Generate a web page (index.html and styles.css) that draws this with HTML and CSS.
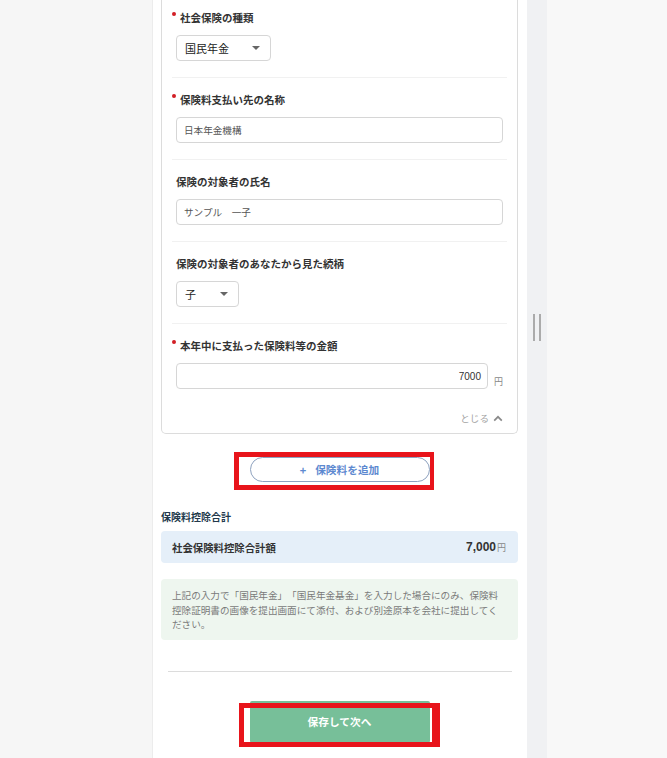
FILE: index.html
```html
<!DOCTYPE html>
<html lang="ja">
<head>
<meta charset="utf-8">
<title>保険料控除</title>
<link rel="stylesheet" href="styles.css">
</head>
<body>
<div class="layout">
  <div class="side-left"></div>
  <main class="panel">
    <section class="card">
      <div class="field first">
        <div class="label"><span class="req"></span>社会保険の種類</div>
        <div class="select select-wide"><span>国民年金</span><i class="caret"></i></div>
      </div>
      <div class="field">
        <div class="label"><span class="req"></span>保険料支払い先の名称</div>
        <div class="input">日本年金機構</div>
      </div>
      <div class="field">
        <div class="label">保険の対象者の氏名</div>
        <div class="input">サンプル　一子</div>
      </div>
      <div class="field">
        <div class="label">保険の対象者のあなたから見た続柄</div>
        <div class="select select-narrow"><span>子</span><i class="caret"></i></div>
      </div>
      <div class="field last">
        <div class="label"><span class="req"></span>本年中に支払った保険料等の金額</div>
        <div class="amount-row">
          <div class="input input-number">7000</div>
          <span class="unit">円</span>
        </div>
      </div>
      <div class="card-foot">
        <span class="close">とじる<svg class="chev" width="10" height="7" viewBox="0 0 10 7"><polyline points="1.2,5.6 5,1.8 8.8,5.6" fill="none" stroke="#8a8a8a" stroke-width="1.7"/></svg></span>
      </div>
    </section>

    <div class="add-row">
      <button class="add-btn"><span class="plus">+</span>保険料を追加</button>
      <span class="annot annot-add"></span>
    </div>

    <h3 class="sum-title">保険料控除合計</h3>
    <div class="sum-box">
      <span class="sum-label">社会保険料控除合計額</span>
      <span class="sum-amount"><b>7,000</b><small>円</small></span>
    </div>

    <p class="note">上記の入力で「国民年金」「国民年金基金」を入力した場合にのみ、保険料控除証明書の画像を提出画面にて添付、および別途原本を会社に提出してください。</p>

    <hr class="divider">

    <div class="save-row">
      <button class="save-btn">保存して次へ</button>
      <span class="annot annot-save"></span>
    </div>
  </main>
  <div class="splitter"><span class="grip"></span></div>
  <div class="side-right"></div>
</div>
</body>
</html>
```

FILE: styles.css
```css
* { box-sizing: border-box; }
html, body { margin: 0; padding: 0; }
body {
  font-family: "Noto Sans CJK JP", "Noto Sans", sans-serif;
  color: #333;
  background: #f7f7f7;
  overflow: hidden;
  text-spacing-trim: space-all;
}
.layout { display: flex; height: 758px; }
.side-left { width: 152px; flex: none; background: #f6f6f6; }
.side-right { flex: 1; background: #f8f8f8; }
.splitter {
  width: 20px; flex: none; background: #f0f1f3;
  display: flex; flex-direction: column; padding-top: 314px; padding-left: 6px;
}
.grip {
  display: block; width: 8px; height: 27px;
  border-left: 2px solid #ababab; border-right: 2px solid #ababab;
}
.panel {
  width: 375px; flex: none; background: #fff;
  border-left: 1px solid #ececec;
  padding: 0 9px 0 8px;
}

/* card */
.card {
  border: 1px solid #dcdcdc; border-top: none;
  border-radius: 0 0 5px 5px;
  height: 434px;
}
.field {
  margin: 0 10px;
  padding: 15px 4px 16px;
  border-bottom: 1px solid #f1f1f1;
}
.field.first { padding-top: 11px; }
.field.last { border-bottom: none; padding-bottom: 0; }
.label {
  font-size: 10.5px; line-height: 14px; height: 14px;
  font-weight: bold; color: #333; white-space: nowrap;
}
.req {
  display: inline-block; width: 3.8px; height: 3.8px; border-radius: 50%;
  background: #d21f26; margin-left: -4px; margin-right: 4.2px;
  vertical-align: top; margin-top: 1px;
}
.input, .select {
  margin-top: 10px; height: 26px;
  border: 1px solid #d6d6d6; border-radius: 4px;
  display: flex; align-items: center;
  background: #fff;
}
.input { padding: 0 7px; font-size: 9.6px; color: #555; }
.select { padding: 0 10px 0 8px; font-size: 11px; color: #222; justify-content: space-between; }
.select-wide { width: 95px; }
.select-narrow { width: 63px; }
.caret {
  width: 0; height: 0;
  border-left: 4px solid transparent; border-right: 4px solid transparent;
  border-top: 4.5px solid #666;
}
.amount-row { display: flex; align-items: flex-end; }
.amount-row .input { flex: 1; margin-right: 6px; }
.input-number {
  justify-content: flex-end; padding-right: 6px;
  font-family: "Liberation Sans", Arial, sans-serif; font-size: 10px; color: #333;
}
.unit { font-size: 9px; line-height: 12px; color: #888; margin-bottom: 1px; width: 9px; }
.card-foot {
  margin: 0 14px; padding-top: 21px;
  display: flex; justify-content: flex-end;
}
.close {
  display: flex; align-items: center; gap: 4px;
  font-size: 9.6px; line-height: 16px; color: #a3a3a3;
}
.chev { display: block; }

/* add button */
.add-row { position: relative; margin-top: 23px; display: flex; justify-content: center; }
.add-btn {
  width: 180px; height: 25px;
  border: 1px solid #8ea2bf; border-radius: 13px; background: #fff;
  font-family: inherit; font-size: 10.7px; font-weight: bold; color: #5d89d0;
  display: flex; align-items: center; justify-content: center; padding: 0;
}
.plus { margin-right: 9px; font-size: 11px; }
.annot { position: absolute; border-style: solid; border-color: #e8141b; }
.annot-add { left: 73px; top: -5px; width: 200px; height: 38px; border-width: 5px 4px 5px 5px; }

/* summary */
.sum-title {
  margin: 28px 0 0; font-size: 10px; line-height: 14px;
  font-weight: bold; color: #22394b;
}
.sum-box {
  margin-top: 7px; height: 32px; border-radius: 4px;
  background: #e5eff9;
  display: flex; align-items: center; justify-content: space-between;
  padding: 0 12px 0 11px;
}
.sum-label { font-size: 10.4px; font-weight: bold; color: #333; }
.sum-amount { display: flex; align-items: baseline; }
.sum-amount b { font-family: "Liberation Sans", Arial, sans-serif; font-size: 12px; color: #333; }
.sum-amount small { font-size: 9px; color: #888; margin-left: 1px; }

.note {
  margin: 16px 0 0; padding: 9px 12px 8px 11px;
  background: #eef6ef; border-radius: 4px;
  font-size: 9.6px; line-height: 14.5px; color: #7a7a7a;
  text-spacing-trim: space-all;
  font-feature-settings: normal;
}
.divider { margin: 31px 6px 0 7px; border: none; border-top: 1px solid #dcdcdc; height: 0; }

.save-row { position: relative; margin-top: 29px; display: flex; justify-content: center; }
.save-btn {
  width: 180px; height: 42px; border: none; border-radius: 2px;
  background: #77bf99; color: #fff;
  font-family: inherit; font-size: 10.7px; font-weight: bold; padding: 0;
}
.annot-save { left: 78px; top: 2px; width: 201px; height: 44px; border-width: 5px 8px 5px 5px; }
```
